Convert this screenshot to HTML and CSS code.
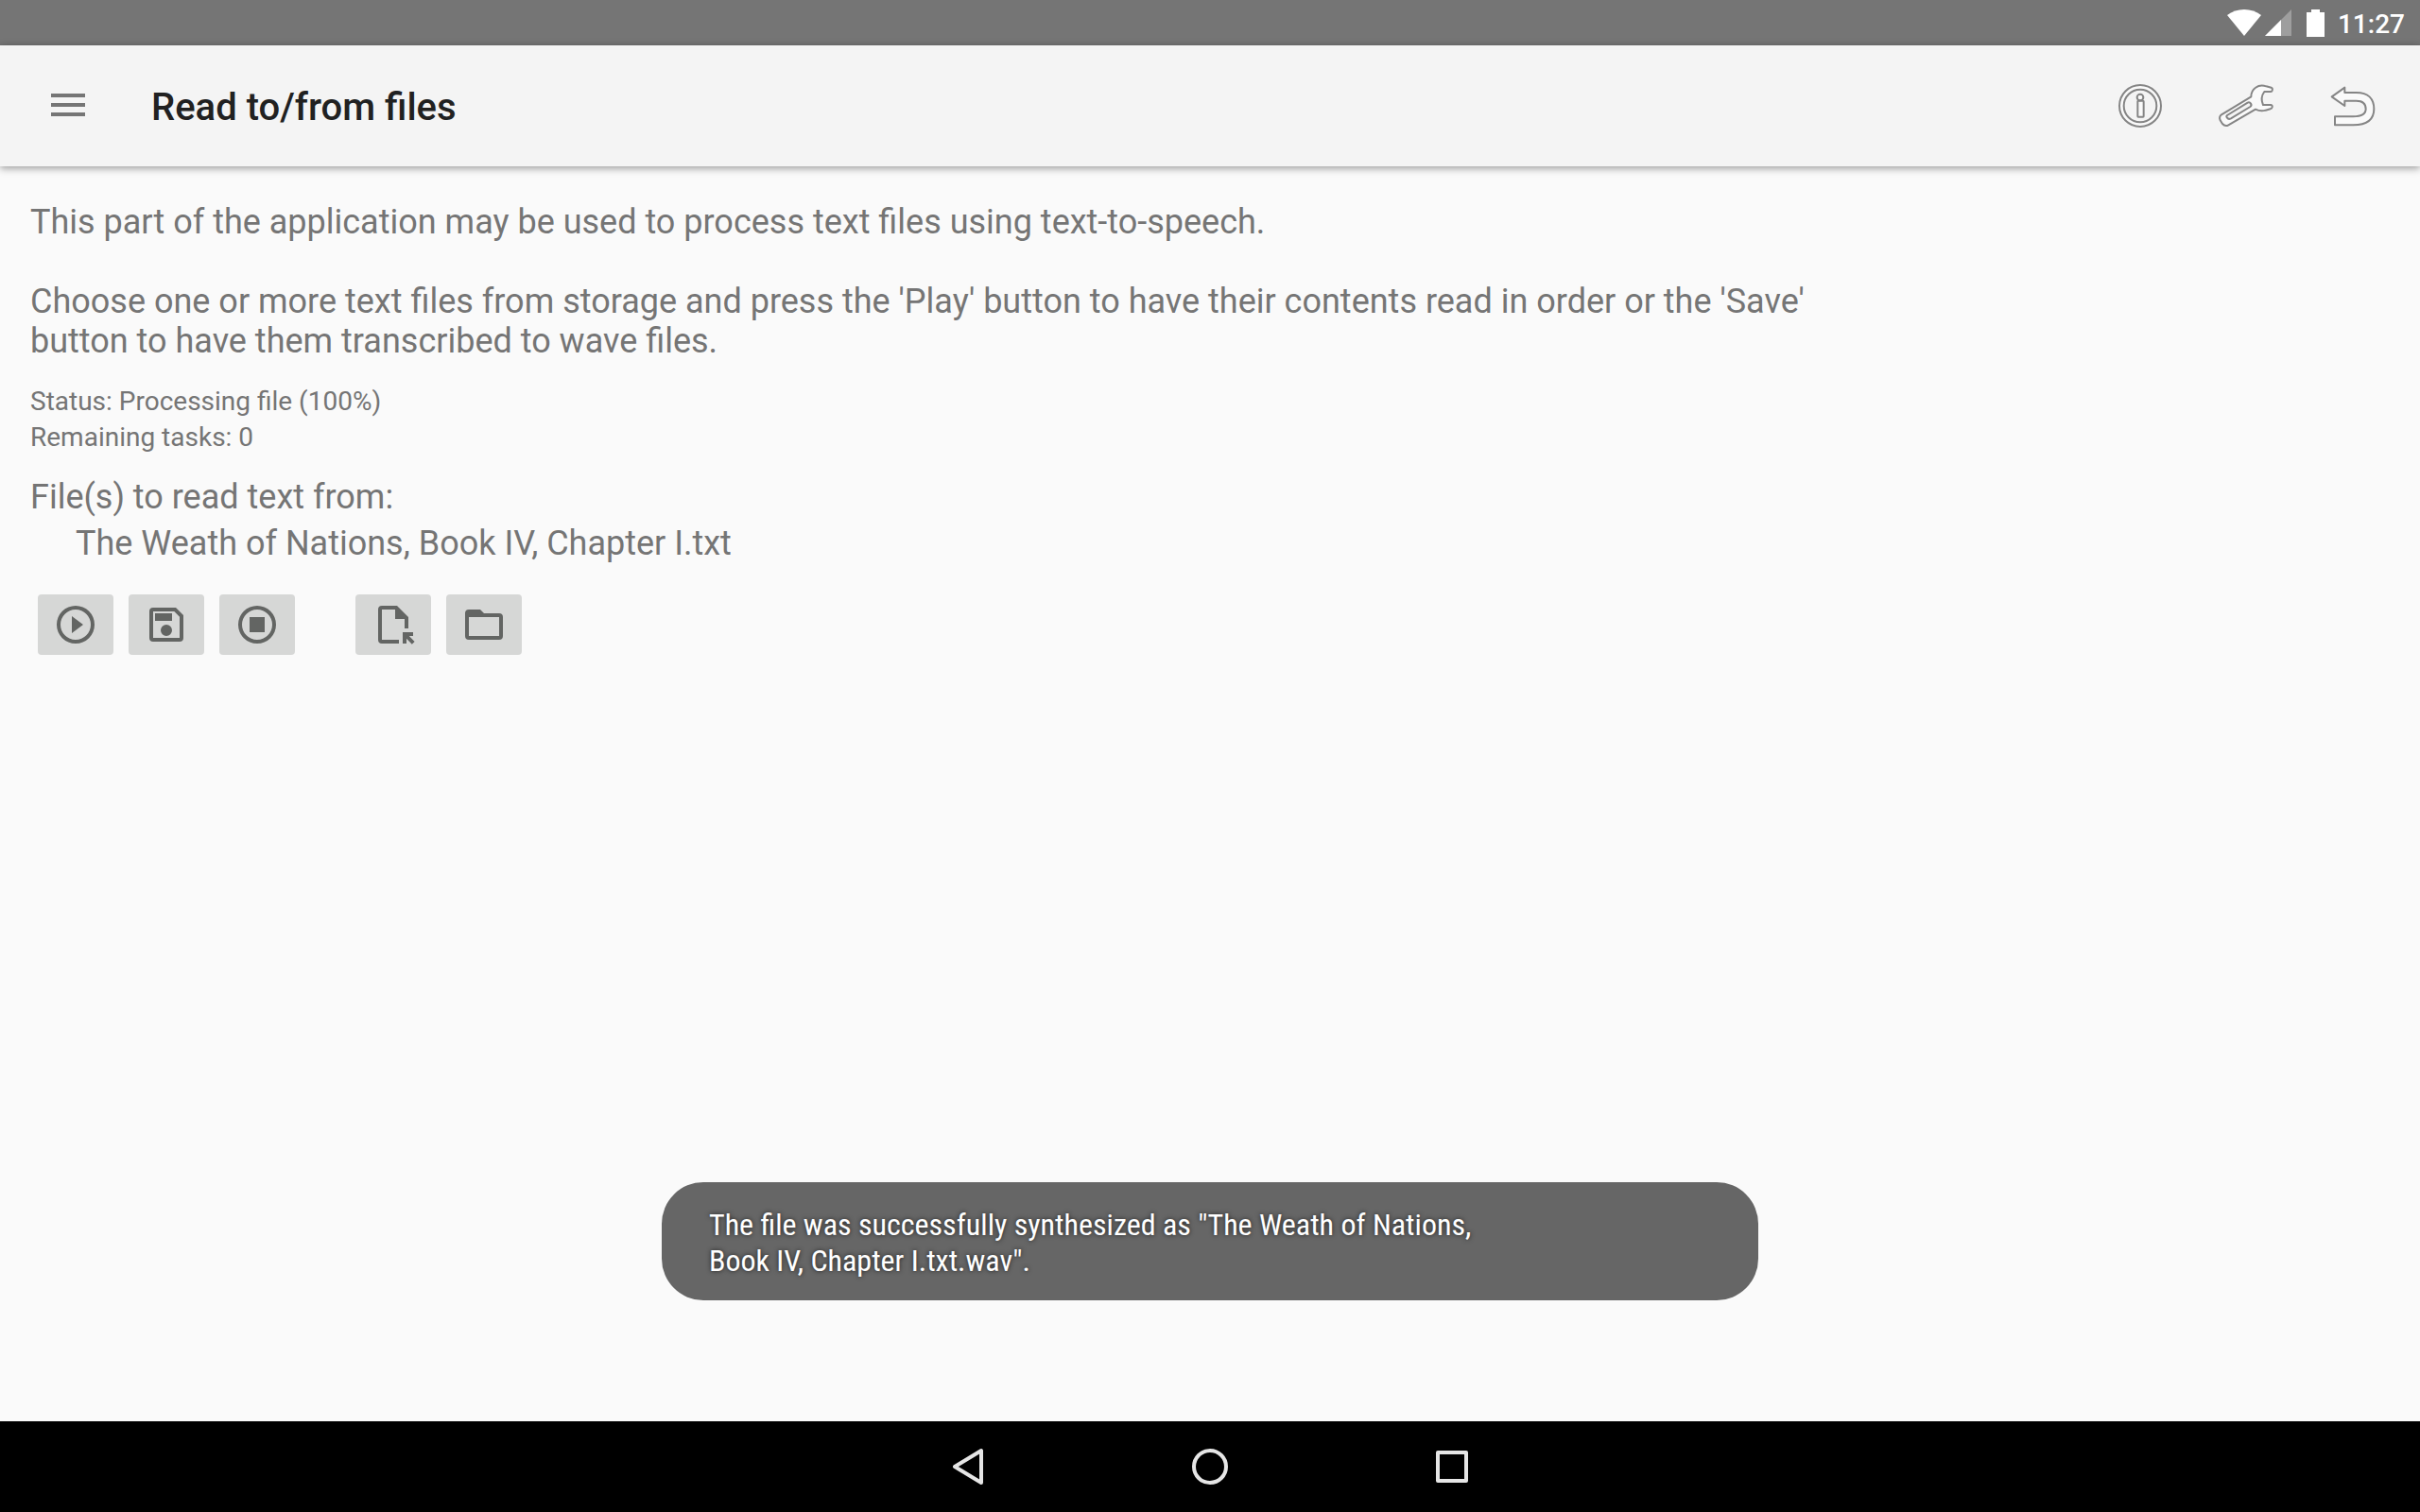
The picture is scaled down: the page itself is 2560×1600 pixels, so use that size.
FILE: index.html
```html
<!DOCTYPE html>
<html lang="en">
<head>
<meta charset="utf-8">
<title>Read to/from files</title>
<link rel="stylesheet" href="styles.css">
</head>
<body>
<div class="statusbar">
  <svg class="wifi" viewBox="0 0 36 28" aria-hidden="true"><path d="M18 28L0 6C10-2 26-2 36 6Z"/></svg>
  <svg class="signal" viewBox="0 0 28 28" aria-hidden="true"><path d="M28 0V28H0Z" opacity=".3"/><path d="M17 11V28H0Z"/></svg>
  <svg class="battery" viewBox="0 0 19 29" aria-hidden="true"><path d="M5 0h9v3h5v26H0V3h5Z"/></svg>
  <span class="clock">11:27</span>
</div>
<header class="toolbar">
  <button class="menu" aria-label="Menu"><svg viewBox="0 0 24 24"><path d="M3 6h18v2H3zM3 11h18v2H3zM3 16h18v2H3z"/></svg></button>
  <h1 class="title">Read to/from files</h1>
  <button class="action" aria-label="About"><svg viewBox="0 0 192 192"><circle cx="96" cy="96" r="66"/><circle class="hole" cx="96" cy="96" r="52"/><rect x="88" y="80" width="19" height="51" rx="2"/><circle cx="96" cy="69" r="10"/></svg></button>
  <button class="action" aria-label="Settings"><svg viewBox="0 0 192 192"><path d="M112 67C112 42 134 26 160 34L176 38Q181 40 179 47Q178 51 174 51H154Q140 70 150 93H175Q180 94 179 100Q178 105 173 106L158 110C146 114 136 112 126 107L40 157Q30 163 21 153L14 142Q9 131 18 124Z"/><path class="hole" d="M36 126L101 86Q107 83 111 89Q115 95 109 99L48 136Q40 140 36 134Q32 130 36 126Z"/></svg></button>
  <button class="action" aria-label="Back"><svg viewBox="0 0 192 192"><path d="M32 67L73 38V54H110C148 54 166 75 166 106C166 142 140 157 100 157H42V130H100C126 130 140 124 140 106C140 88 128 80 110 80H73V96Z"/></svg></button>
</header>
<main class="content">
  <p class="intro">This part of the application may be used to process text files using text-to-speech.</p>
  <p class="intro">Choose one or more text files from storage and press the 'Play' button to have their contents read in order or the 'Save' button to have them transcribed to wave files.</p>
  <div class="status">
    <p>Status: Processing file (100%)</p>
    <p>Remaining tasks: 0</p>
  </div>
  <section class="files">
    <h2>File(s) to read text from:</h2>
    <ul><li>The Weath of Nations, Book IV, Chapter I.txt</li></ul>
  </section>
  <div class="controls">
    <div class="group">
      <button aria-label="Play"><svg viewBox="0 0 24 24"><path fill-rule="evenodd" d="M12 2a10 10 0 1 0 0 20a10 10 0 0 0 0-20ZM12 4a8 8 0 1 1 0 16a8 8 0 0 1 0-16ZM10 7.500v9l6-4.500Z"/></svg></button>
      <button aria-label="Save"><svg viewBox="0 0 24 24"><path fill-rule="evenodd" d="M17 3H5a2 2 0 0 0-2 2v14a2 2 0 0 0 2 2h14a2 2 0 0 0 2-2V7ZM19 19H5V5h11.170L19 7.830ZM6 6h9v4H6ZM12 12a3 3 0 1 1 0 6a3 3 0 0 1 0-6Z"/></svg></button>
      <button aria-label="Stop"><svg viewBox="0 0 24 24"><path fill-rule="evenodd" d="M12 2a10 10 0 1 0 0 20a10 10 0 0 0 0-20ZM12 4a8 8 0 1 1 0 16a8 8 0 0 1 0-16ZM8 8h8v8H8Z"/></svg></button>
    </div>
    <div class="group">
      <button aria-label="Choose file"><svg viewBox="0 0 24 24"><path d="M14 2H6a2 2 0 0 0-2 2v16a2 2 0 0 0 2 2h9v-2H6V4h7v5h5v5h2V8ZM17 16h5.500v2h-2.100l2.900 3l-1.400 1.400L19 19.400V22h-2Z"/></svg></button>
      <button aria-label="Choose folder"><svg viewBox="0 0 24 24"><path fill-rule="evenodd" d="M20 6h-8l-2-2H4a2 2 0 0 0-2 2v12a2 2 0 0 0 2 2h16a2 2 0 0 0 2-2V8a2 2 0 0 0-2-2ZM20 18H4V8h16Z"/></svg></button>
    </div>
  </div>
</main>
<div class="toast" role="status">The file was successfully synthesized as "The Weath of Nations,<br>Book IV, Chapter I.txt.wav".</div>
<nav class="navbar">
  <button aria-label="Back"><svg viewBox="0 0 48 48"><path d="M38 7V41L10 24Z"/></svg></button>
  <button aria-label="Home"><svg viewBox="0 0 48 48"><circle cx="24" cy="24" r="17"/></svg></button>
  <button aria-label="Overview"><svg viewBox="0 0 48 48"><rect x="9" y="9" width="30" height="30"/></svg></button>
</nav>
</body>
</html>
```
FILE: styles.css
```css
* { box-sizing: border-box; }
body {
  margin: 0;
  min-height: 100vh;
  display: flex;
  flex-direction: column;
  position: relative;
  background: #fafafa;
  color: #757575;
  font-family: Roboto, sans-serif;
}
h1, h2, p, ul { margin: 0; padding: 0; font-weight: 400; }
button { border: 0; padding: 0; background: none; display: flex; align-items: center; justify-content: center; }
svg { display: block; flex: none; }

.statusbar {
  height: 48px;
  padding: 0 16px;
  display: flex;
  justify-content: flex-end;
  align-items: center;
  background: #757575;
  color: #fff;
  fill: #fff;
}
.wifi { width: 36px; height: 28px; }
.signal { width: 28px; height: 28px; margin-left: 4px; }
.battery { width: 19px; height: 29px; margin: 0 14px 0 16px; }
.clock { font-size: 28px; font-weight: 500; line-height: 46px; padding-top: 4px; }

.toolbar {
  height: 128px;
  padding: 0 16px 0 48px;
  display: flex;
  align-items: center;
  background: #f4f4f4;
  box-shadow: 0 2px 8px rgba(0, 0, 0, .4);
}
.menu { padding-bottom: 2px; }
.menu svg { width: 48px; height: 48px; fill: #757575; }
.title { flex: 1; margin-left: 64px; padding-top: 4px; font-size: 40px; font-weight: 500; line-height: 48px; color: #212121; }
.action { width: 112px; height: 112px; }
.action svg { width: 64px; height: 64px; fill: #fafafa; stroke: #858585; stroke-width: 6px; stroke-linejoin: round; }
.action .hole { fill: #f4f4f4; }

.content { flex: 1; padding: 38px 32px; }
.intro { max-width: 1920px; margin-bottom: 42px; font-size: 36px; line-height: 42px; }
.intro + .intro { margin-bottom: 24px; }
.status { margin-bottom: 20px; font-size: 28px; line-height: 38px; }
.files, .files h2 { font-size: 36px; line-height: 49px; }
.files ul { list-style: none; padding-left: 48px; }
.controls { display: flex; gap: 64px; margin-top: 29px; padding-left: 8px; }
.group { display: flex; gap: 16px; }
.group button { width: 80px; height: 64px; border-radius: 4px; background: #d6d7d6; }
.group svg { width: 48px; height: 48px; fill: #636563; }

.toast {
  position: absolute;
  bottom: 224px;
  left: 50%;
  transform: translateX(-50%);
  width: 1160px;
  padding: 26px 50px 23px;
  border-radius: 44px;
  background: #666;
  color: #fff;
  font-family: "Roboto Condensed", Roboto, sans-serif;
  font-size: 32px;
  line-height: 38px;
  text-shadow: 0 0 5px rgba(0, 0, 0, .7);
}

.navbar { height: 96px; display: flex; justify-content: center; background: #000; }
.navbar button { width: 256px; }
.navbar svg { width: 48px; height: 48px; fill: none; stroke: #e6e6e6; stroke-width: 4px; stroke-linejoin: round; }
```
